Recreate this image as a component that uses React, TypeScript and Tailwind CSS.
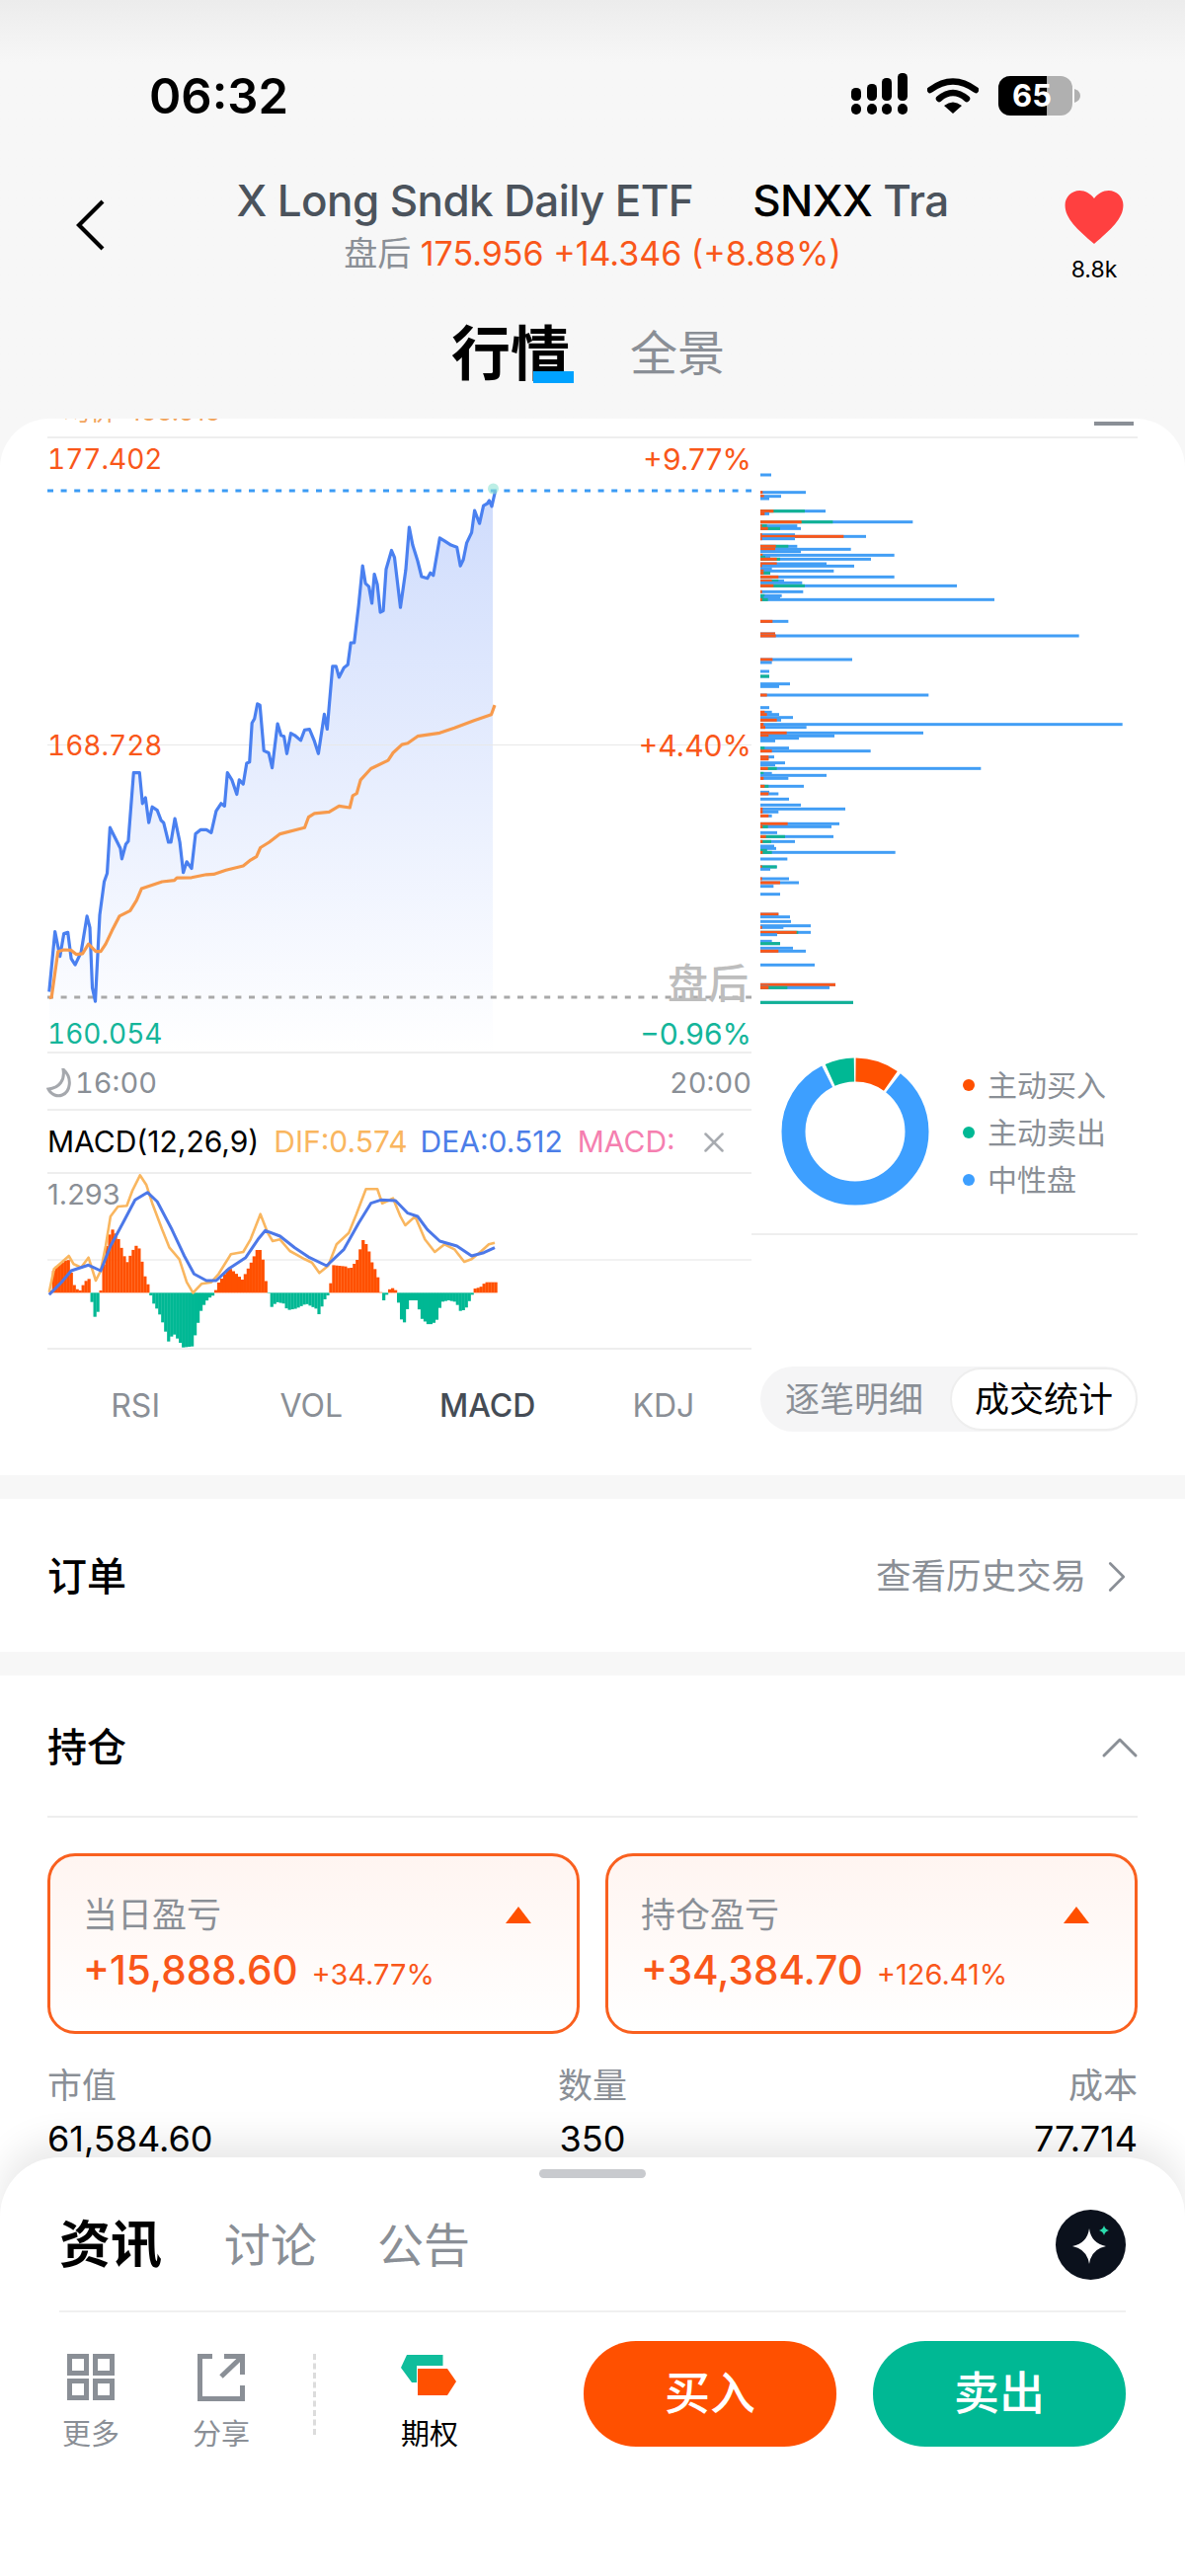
import { ChevronRight, ChevronUp, X } from "lucide-react";

const BLUE_LINE: number[][] = [
  [100,1365],[112,1220],[122,1280],[130,1225],[138,1222],[145,1285],[153,1300],[165,1270],[177,1183],[183,1210],[188,1355],[194,1388],[203,1180],[212,1100],[218,1080],[224,970],[245,1020],[248,1045],[256,1010],[261,1003],[272,838],[284,838],[290,912],[296,898],[303,958],[310,920],[320,928],[328,953],[333,958],[343,1005],[348,1005],[356,948],[366,1005],[373,1078],[380,1052],[390,1068],[398,985],[408,975],[420,975],[430,982],[440,930],[450,912],[457,918],[463,838],[472,855],[482,890],[487,855],[495,865],[502,815],[508,812],[513,718],[518,708],[524,672],[529,675],[537,785],[547,790],[554,826],[565,720],[572,748],[578,750],[584,792],[592,743],[600,748],[612,760],[620,735],[630,733],[640,762],[648,792],[660,697],[666,733],[677,582],[684,582],[690,608],[700,585],[708,578],[714,525],[721,525],[730,435],[738,340],[744,382],[751,390],[757,430],[762,360],[768,385],[774,452],[780,448],[786,348],[797,303],[803,320],[815,440],[826,350],[833,247],[840,290],[850,328],[858,366],[870,370],[876,357],[882,363],[895,273],[905,280],[918,290],[930,295],[937,340],[943,325],[950,285],[960,260],[966,207],[976,238],[984,195],[992,190],[996,183],[1001,197],[1008,160],
];

const AVG_LINE: number[][] = [
  [100,1380],[105,1378],[118,1268],[130,1264],[145,1265],[155,1275],[168,1273],[180,1250],[195,1268],[205,1268],[215,1250],[228,1218],[243,1183],[265,1170],[278,1145],[288,1117],[300,1112],[330,1100],[355,1097],[360,1091],[390,1090],[420,1083],[435,1082],[460,1072],[495,1062],[510,1048],[522,1040],[530,1018],[548,1005],[570,985],[610,973],[620,970],[628,945],[640,936],[670,932],[690,918],[712,922],[718,893],[726,888],[734,855],[755,828],[790,808],[800,790],[818,770],[830,767],[850,750],[895,742],[925,730],[965,712],[1000,698],[1007,675],
];

const DIF_LINE: number[][] = [
  [100,800],[110,730],[125,710],[140,690],[150,715],[165,725],[180,695],[195,765],[205,735],[215,660],[225,570],[240,540],[258,538],[270,490],[285,445],[298,475],[310,530],[330,610],[345,665],[365,700],[380,770],[393,802],[410,775],[430,770],[445,745],[470,685],[495,678],[510,640],[530,563],[545,620],[555,645],[570,640],[590,675],[620,700],[635,710],[650,742],[668,720],[685,655],[710,620],[725,565],[745,487],[768,487],[778,530],[800,515],[815,570],[825,597],[845,570],[865,640],[885,678],[905,655],[925,670],[945,708],[960,700],[980,675],[995,655],[1007,650],
];

const DEA_LINE: number[][] = [
  [100,808],[125,770],[145,735],[180,718],[205,735],[225,660],[250,590],[275,520],[300,497],[320,525],[350,610],[375,690],[395,745],[420,765],[440,765],[465,730],[500,695],[525,640],[540,613],[570,630],[600,665],[630,695],[665,720],[700,670],[730,590],[755,530],[775,520],[805,522],[830,560],[850,570],[870,610],[895,645],[930,660],[960,690],[985,680],[1007,665],
];

const HISTOGRAM: number[][] = [
  [100,795],[106,735],[112,722],[120,715],[128,705],[138,702],[145,770],[152,790],[160,795],[170,768],[178,760],[181,795],[184,830],[190,875],[196,860],[200,810],[202,795],[210,690],[218,630],[226,610],[236,630],[245,670],[255,712],[265,680],[273,658],[282,670],[290,745],[297,770],[301,795],[308,830],[320,860],[330,900],[340,950],[350,925],[360,945],[370,968],[388,965],[396,920],[405,860],[415,830],[425,815],[433,808],[440,775],[450,755],[462,725],[475,740],[490,762],[505,720],[520,672],[530,672],[535,745],[542,795],[546,810],[550,845],[560,830],[575,835],[582,855],[600,850],[620,835],[640,850],[647,870],[655,828],[665,808],[668,795],[675,718],[700,722],[710,730],[725,700],[735,640],[745,660],[755,715],[765,745],[770,795],[775,808],[778,825],[784,808],[786,795],[795,787],[803,795],[806,808],[812,880],[820,892],[830,825],[845,825],[855,880],[870,900],[885,890],[895,830],[910,825],[925,830],[935,860],[945,850],[958,808],[962,790],[975,785],[985,770],[1000,770],[1007,770],
];

// y, end, orange end, green end (crop units)
const BARS_TOP: number[][] = [
  [3,48,0,0],[56,153,22,0],[68,78,26,0],[75,42,0,0],[113,213,55,150],[121,42,28,0],[146,478,140,235],[158,127,20,35],[166,138,38,75],[185,120,20,0],[190,336,268,0],[197,120,20,0],[220,127,62,100],[229,290,60,0],[236,138,0,0],[247,422,22,0],[253,45,0,30],[259,351,65,75],[273,216,65,0],[280,300,20,0],[288,50,0,0],[295,238,25,0],[301,45,25,45],[313,422,70,0],[325,87,50,70],[331,142,0,0],[340,612,55,150],[358,145,20,0],[370,80,0,28],[376,75,0,25],[382,726,20,38],[448,100,52,0],[486,60,60,0],[492,983,62,0],[564,294,52,0],[573,50,0,0],[600,42,0,0],[615,42,0,42],[638,105,0,0],[646,72,0,0],[672,526,35,0],[710,42,0,0],[724,50,28,0],[731,72,35,0],[740,114,0,0],[748,78,65,0],[761,1115,25,0],[770,155,30,0],[787,510,95,0],[796,240,40,0],[803,132,0,0],[811,60,0,0],[833,102,0,28],
];

const BARS_BOTTOM: number[][] = [
  [2,350,50,0],[20,57,40,0],[26,40,40,0],[38,90,0,0],[44,60,0,0],[55,685,38,65],[70,50,0,25],[76,216,0,0],[85,100,25,0],[109,147,28,40],[127,42,0,0],[132,70,40,0],[148,102,0,0],[166,138,0,0],[178,273,22,0],[187,70,22,0],[199,50,40,0],[223,255,98,0],[232,231,22,38],[250,66,0,0],[262,237,32,90],[277,120,22,48],[291,57,0,0],[298,63,0,0],[304,35,0,35],[310,425,22,50],[330,97,0,0],[354,65,20,65],[361,45,0,0],[390,102,20,0],[402,132,75,0],[413,55,0,0],[437,75,0,0],[498,70,70,0],[506,105,0,0],[520,108,0,0],[533,168,0,0],[538,85,20,0],[553,168,125,130],[560,66,0,0],[580,50,0,0],[587,75,0,75],[601,114,0,0],[610,153,70,0],[652,180,0,0],[712,243,243,0],[717,40,40,0],[721,225,40,97],[766,297,0,297],
];

const priceX = (x: number) => x / 2.01;
const priceY = (y: number) => 430 + y / 2.376;
const macdY = (y: number) => 1040 + y / 3;

const toPoints = (line: number[][], fy: (y: number) => number) =>
  line.map(([x, y]) => `${priceX(x).toFixed(1)},${fy(y).toFixed(1)}`).join(" ");

const histogramBars = () => {
  const bars: { x: number; y: number }[] = [];
  for (let zx = 100; zx <= 1007; zx += 6) {
    const i = HISTOGRAM.findIndex((p) => p[0] >= zx);
    const b = HISTOGRAM[Math.max(i, 1)];
    const a = HISTOGRAM[Math.max(i, 1) - 1];
    const y = a[1] + ((b[1] - a[1]) * (zx - a[0])) / Math.max(b[0] - a[0], 1);
    bars.push({ x: zx, y });
  }
  return bars;
};

function VolumeBars({ rows, base }: { rows: number[][]; base: number }) {
  return (
    <>
      {rows.map(([y, end, orange, green], i) => {
        const top = base + y / 3 - 1.5;
        const w = (v: number) => (v - 15) / 3;
        return (
          <g key={i}>
            <rect x={770} y={top} width={w(end)} height={3} fill="#429ef5" />
            {green > 0 && <rect x={770} y={top} width={w(green)} height={3} fill="#12b294" />}
            {orange > 0 && <rect x={770} y={top} width={w(orange)} height={3} fill="#f9571a" />}
          </g>
        );
      })}
    </>
  );
}

function StatusIcons() {
  return (
    <div className="flex items-center">
      <svg width="60" height="48" viewBox="0 0 60 48" fill="#000" className="mr-[17px]">
        <rect x="0" y="16" width="10" height="13" rx="4.5" />
        <rect x="16" y="12" width="10" height="17" rx="4.5" />
        <rect x="31" y="6" width="10" height="23" rx="4.5" />
        <rect x="47" y="1" width="10" height="28" rx="4.5" />
        <rect x="0" y="32" width="10" height="11" rx="5" />
        <rect x="16" y="32" width="10" height="11" rx="5" />
        <rect x="31" y="32" width="10" height="11" rx="5" />
        <rect x="47" y="32" width="10" height="11" rx="5" />
      </svg>
      <svg width="52" height="38" viewBox="0 0 52 38" className="mr-[20px]">
        <path d="M3 13 Q26 -4 49 13" fill="none" stroke="#000" strokeWidth="6.5" strokeLinecap="round" />
        <path d="M12 22 Q26 10 40 22" fill="none" stroke="#000" strokeWidth="6.5" strokeLinecap="round" />
        <path d="M26 37 L17 29 Q26 22 35 29 Z" fill="#000" />
      </svg>
      <div className="relative flex h-[40px] w-[75px] overflow-hidden rounded-[12px] bg-[#b0b0b0]">
        <div className="h-full w-[49px] bg-black" />
        <span className="absolute left-[14px] top-0 text-[31px] font-bold leading-[40px] text-white">65</span>
      </div>
      <svg width="6" height="14" viewBox="0 0 6 14" className="ml-[2px]">
        <path d="M0 0 Q6 2 6 7 Q6 12 0 14 Z" fill="#b0b0b0" />
      </svg>
    </div>
  );
}

function PriceChart() {
  const blue = toPoints(BLUE_LINE, priceY);
  const avg = toPoints(AVG_LINE, priceY);
  return (
    <div className="relative h-[621px] w-[713px]">
      <svg width="713" height="621" viewBox="48 444 713 621" className="block">
        <defs>
          <linearGradient id="area" gradientUnits="userSpaceOnUse" x1="0" y1="497" x2="0" y2="1065">
            <stop offset="0" stopColor="#cfdcfc" />
            <stop offset="0.55" stopColor="#e9effe" />
            <stop offset="1" stopColor="#ffffff" />
          </linearGradient>
        </defs>
        <polygon points={`${blue} 499,497 499,1065 50,1065`} fill="url(#area)" />
        <line x1="48" x2="761" y1="754.5" y2="754.5" stroke="#e8e8e8" strokeWidth="1" />
        <line x1="48" x2="761" y1="497" y2="497" stroke="#3b9bf5" strokeWidth="3" strokeDasharray="6 7.6" />
        <line x1="48" x2="761" y1="1010" y2="1010" stroke="#a9a9a9" strokeWidth="3" strokeDasharray="6 7.6" />
        <polyline points={blue} fill="none" stroke="#4a80f0" strokeWidth="3.2" strokeLinejoin="round" />
        <polyline points={avg} fill="none" stroke="#f79a4c" strokeWidth="3.2" strokeLinejoin="round" />
        <circle cx="499.5" cy="495" r="5.5" fill="#8fe3d3" opacity="0.6" />
      </svg>
      <span className="absolute left-0 top-[3px] text-[28px] tabular-nums leading-[36px] text-[#f9571a]">177.402</span>
      <span className="absolute right-0 top-[3px] text-[30px] leading-[36px] text-[#f9571a]">+9.77%</span>
      <span className="absolute left-0 top-[293px] text-[28px] tabular-nums leading-[36px] text-[#f9571a]">168.728</span>
      <span className="absolute right-0 top-[293px] text-[30px] leading-[36px] text-[#f9571a]">+4.40%</span>
      <span className="absolute right-[3px] top-[527px] text-[41px] font-medium leading-[50px] text-[#bdbdbd]">盘后</span>
      <span className="absolute left-0 top-[585px] text-[28px] tabular-nums leading-[36px] text-[#14b59a]">160.054</span>
      <span className="absolute right-0 top-[585px] text-[30px] leading-[36px] text-[#14b59a]">−0.96%</span>
    </div>
  );
}

function MacdChart() {
  return (
    <div className="relative h-[176px] w-[713px]">
      <svg width="713" height="176" viewBox="48 1187 713 176" className="block">
        <line x1="48" x2="761" y1="1274" y2="1274" stroke="#eeeeee" strokeWidth="1.5" />
        {histogramBars().map((bar, i) => {
          const up = bar.y < 802;
          const top = macdY(Math.min(bar.y, 802));
          const h = Math.abs(macdY(bar.y) - macdY(802));
          return (
            <rect
              key={i}
              x={priceX(bar.x)}
              y={top}
              width={3.2}
              height={Math.max(h, 0.5)}
              fill={up ? "#ff5000" : "#00b894"}
            />
          );
        })}
        <polyline points={toPoints(DIF_LINE, macdY)} fill="none" stroke="#f9b65f" strokeWidth="2.6" strokeLinejoin="round" />
        <polyline points={toPoints(DEA_LINE, macdY)} fill="none" stroke="#4c78e8" strokeWidth="3" strokeLinejoin="round" />
      </svg>
      <span className="absolute left-0 top-[3px] text-[29px] leading-[36px] text-[#8a8f96]">1.293</span>
    </div>
  );
}

function Donut() {
  return (
    <svg width="150" height="150" viewBox="0 0 150 150" className="-rotate-90">
      <circle cx="75" cy="75" r="62.5" pathLength={360} fill="none" stroke="#ff5000" strokeWidth="24" strokeDasharray="34.5 325.5" strokeDashoffset="-0.5" />
      <circle cx="75" cy="75" r="62.5" pathLength={360} fill="none" stroke="#3d9fff" strokeWidth="24" strokeDasharray="295 65" strokeDashoffset="-38" />
      <circle cx="75" cy="75" r="62.5" pathLength={360} fill="none" stroke="#00b894" strokeWidth="24" strokeDasharray="23 337" strokeDashoffset="-336" />
    </svg>
  );
}

function ProfitCard({ label, value, pct }: { label: string; value: string; pct: string }) {
  return (
    <div className="h-[183px] rounded-[28px] border-[3px] border-[#f9601f] bg-gradient-to-b from-[#fff5f1] to-white pl-[33px] pr-[46px] pt-[37px]">
      <div className="flex items-center justify-between">
        <span className="text-[35px] leading-[44px] text-[#8a8f96]">{label}</span>
        <span className="h-0 w-0 border-x-[13px] border-b-[17px] border-x-transparent border-b-[#ff5000]" />
      </div>
      <div className="mt-[10px] flex items-baseline gap-[14px] text-[#f9571a]">
        <span className="text-[40.5px] font-medium leading-[50px]">{value}</span>
        <span className="text-[29px] leading-[50px]">{pct}</span>
      </div>
    </div>
  );
}

function BottomSheet() {
  return (
    <div className="absolute bottom-0 left-0 h-[424px] w-full rounded-t-[60px] bg-white px-[60px] shadow-[0_-16px_36px_rgba(0,0,0,0.09)]">
      <div className="mx-auto mt-[12px] h-[9px] w-[108px] rounded-full bg-[#c8cace]" />
      <div className="mt-[32px] flex items-center border-b-2 border-[#f0f0f0] pb-[31px]">
        <span className="text-[52px] font-bold leading-[71px] text-black">资讯</span>
        <span className="ml-[63px] text-[47px] leading-[71px] text-[#8a8f96]">讨论</span>
        <span className="ml-[61px] text-[47px] leading-[71px] text-[#8a8f96]">公告</span>
        <div className="ml-auto flex h-[71px] w-[71px] items-center justify-center rounded-full bg-[#0b111c]">
          <svg width="71" height="71" viewBox="0 0 71 71">
            <path d="M34 19 Q36 34 51 37 Q36 40 34 55 Q32 40 17 37 Q32 34 34 19 Z" fill="#fff" />
            <path d="M49 16 Q50 20 54 21 Q50 22 49 26 Q48 22 44 21 Q48 20 49 16 Z" fill="#2bdcae" />
          </svg>
        </div>
      </div>
      <div className="mt-[29px] flex items-start">
        <div className="flex w-[64px] flex-col items-center pt-[13px]">
          <svg width="48" height="48" viewBox="0 0 48 48" fill="none" stroke="#8a8f96" strokeWidth="5">
            <rect x="2.5" y="2.5" width="17" height="17" />
            <rect x="28.5" y="2.5" width="17" height="17" />
            <rect x="2.5" y="27.5" width="17" height="17" />
            <rect x="28.5" y="27.5" width="17" height="17" />
          </svg>
          <span className="mt-[16px] text-[29px] leading-[36px] text-[#8a8f96]">更多</span>
        </div>
        <div className="ml-[68px] flex w-[64px] flex-col items-center pt-[13px]">
          <svg width="48" height="48" viewBox="0 0 48 48" fill="none" stroke="#8a8f96" strokeWidth="5">
            <path d="M15 2.5 H2.5 V45.5 H45.5 V32" />
            <path d="M24 23 L45 3" />
            <path d="M27 2.5 H45.5 V21" />
          </svg>
          <span className="mt-[16px] text-[29px] leading-[36px] text-[#8a8f96]">分享</span>
        </div>
        <div className="ml-[61px] mt-[13px] h-[82px] border-l-[3px] border-dashed border-[#dcdcdc]" />
        <div className="ml-[83px] flex w-[64px] flex-col items-center pt-[13px]">
          <svg width="58" height="48" viewBox="0 0 58 48">
            <path d="M6 1 H42.5 V12 H16 V29 H11 L0 14 Z" fill="#10bd9c" />
            <path d="M17 15 H47 L56 28 L47 42 H17 Z" fill="#ff5000" />
          </svg>
          <span className="mt-[16px] text-[29px] leading-[36px] text-black">期权</span>
        </div>
        <button className="ml-auto flex h-[107px] w-[256px] items-center justify-center rounded-[53px] bg-[#ff5000] pb-[2px] text-[46px] font-medium text-white">
          买入
        </button>
        <button className="ml-[37px] flex h-[107px] w-[256px] items-center justify-center rounded-[53px] bg-[#00b894] pb-[2px] text-[46px] font-medium text-white">
          卖出
        </button>
      </div>
    </div>
  );
}

export default function App() {
  return (
    <div className="relative h-[2609px] w-[1200px] overflow-hidden bg-[#f7f7f7] font-['Inter','Noto_Sans_CJK_SC',sans-serif]">
      {/* status bar */}
      <div className="h-[424px] bg-gradient-to-b from-[#ececec] via-[#f7f7f7] via-[15%] to-[#f7f7f7]">
        <div className="flex h-[54px] translate-y-[70px] items-center justify-between pl-[151px] pr-[106px]">
          <span className="text-[49px] font-semibold leading-none text-black">06:32</span>
          <StatusIcons />
        </div>

        {/* title */}
        <div className="mt-[126px] grid grid-cols-[236px_minmax(0,1fr)_236px]">
          <div className="pl-[77px] pt-[22px]">
            <svg width="30" height="52" viewBox="0 0 30 52" fill="none" stroke="#000" strokeWidth="4.2">
              <path d="M27 2 L3 26 L27 50" />
            </svg>
          </div>
          <div className="text-center">
            <div className="whitespace-nowrap text-[44px] font-medium leading-[46px] tracking-[-0.6px] text-[#4b535c]">
              X Long Sndk Daily ETF<span className="ml-[60px] text-black">SNXX</span> Tra
            </div>
            <div className="mt-[9px] text-[34px] leading-[44px] text-[#f9571a]">
              <span className="text-[#8a8f96]">盘后</span> 175.956 +14.346 (+8.88%)
            </div>
          </div>
          <div className="flex flex-col items-end pr-[61px] pt-[13px]">
            <div className="flex w-[62px] flex-col items-center">
              <svg width="60" height="54" viewBox="0 0 24 22">
                <path d="M12 22 C5 16 0 11.500 0 6 C0 2.600 2.700 0 6 0 C8.400 0 10.600 1.300 12 3.300 C13.400 1.300 15.600 0 18 0 C21.300 0 24 2.600 24 6 C24 11.500 19 16 12 22 Z" fill="#ff4040" />
              </svg>
              <span className="mt-[12px] text-[23px] leading-[28px] text-black">8.8k</span>
            </div>
          </div>
        </div>

        {/* tabs */}
        <div className="mt-[36px] flex items-center pl-[457px]">
          <span className="relative text-[60px] font-bold leading-[70px] text-black">
            行情
            <span className="absolute left-[83px] top-[53px] h-[12px] w-[41px] bg-[#00a2ff]" />
          </span>
          <span className="ml-[61px] text-[48px] leading-[70px] text-[#8a8f96]">全景</span>
        </div>
      </div>

      {/* chart panel */}
      <div className="relative h-[1070px] overflow-hidden rounded-t-[50px] bg-white">
        <div className="absolute left-[65px] top-[-22px] text-[26px] leading-[30px] text-[#f2a55e]">均价: 166.516</div>
        <div className="absolute right-[52px] top-[3px] h-[4px] w-[40px] bg-[#8a8f96]" />
        <div className="ml-[48px] mr-[48px] h-[20px] border-b-2 border-[#eeeeee]" />
        <div className="flex">
          <div className="w-[761px] pl-[48px]">
            <PriceChart />
            <div className="flex h-[60px] items-center justify-between border-y-2 border-[#eeeeee] pt-[4px] text-[29px] tabular-nums text-[#8a8f96]">
              <div className="flex items-center gap-[3px]">
                <svg width="26" height="30" viewBox="0 0 26 30" className="-ml-[1px]">
                  <path d="M17 1 C19 12 13 20 2 21 C5 27 11 29 16 27 C24 24 27 10 17 1 Z" fill="none" stroke="#a5a8ad" strokeWidth="3" />
                </svg>
                16:00
              </div>
              <span>20:00</span>
            </div>
            <div className="flex h-[62px] items-center pt-[1px] text-[30px]">
              <span className="text-black">MACD(12,26,9)</span>
              <span className="ml-[15px] text-[#f9b65f]">DIF:0.574</span>
              <span className="ml-[13px] text-[#4c7ee8]">DEA:0.512</span>
              <span className="ml-[15px] text-[#f57fb0]">MACD:</span>
              <X size={34} strokeWidth={1.8} className="ml-[22px] text-[#a8abb0]" />
            </div>
            <div className="border-y-2 border-[#eeeeee]">
              <MacdChart />
            </div>
            <div className="mt-[27px] grid grid-cols-4 text-center text-[32px] leading-[60px] text-[#8a8f96]">
              <span>RSI</span>
              <span>VOL</span>
              <span className="font-medium text-[#454c55]">MACD</span>
              <span>KDJ</span>
            </div>
          </div>

          <div className="w-[391px]">
            <svg width="391" height="576" viewBox="761 444 391 576" className="block">
              <VolumeBars rows={BARS_TOP} base={480} />
              <VolumeBars rows={BARS_BOTTOM} base={760} />
            </svg>
            <div className="flex h-[231px] items-center border-b-2 border-[#eeeeee] pt-[22px] pl-[30px]">
              <Donut />
              <div className="ml-[34px] flex flex-col gap-[12px] pt-[3px] text-[30px] leading-[36px] text-[#8a8f96]">
                <div className="flex items-center gap-[13px]">
                  <span className="h-[12px] w-[12px] rounded-full bg-[#ff5000]" />
                  主动买入
                </div>
                <div className="flex items-center gap-[13px]">
                  <span className="h-[12px] w-[12px] rounded-full bg-[#00b894]" />
                  主动卖出
                </div>
                <div className="flex items-center gap-[13px]">
                  <span className="h-[12px] w-[12px] rounded-full bg-[#3d9fff]" />
                  中性盘
                </div>
              </div>
            </div>
            <div className="ml-[9px] mt-[133px] flex h-[66px] items-center rounded-full bg-[#f5f5f6] text-[35px]">
              <span className="flex-1 pl-[25px] text-[#8a8f96]">逐笔明细</span>
              <span className="flex h-[64px] w-[190px] items-center justify-center rounded-full border-2 border-[#eeeeee] bg-white text-black">
                成交统计
              </span>
            </div>
          </div>
        </div>
      </div>

      {/* orders */}
      <div className="mt-[24px] flex h-[155px] items-center justify-between bg-white pl-[48px] pr-[48px] pt-[3px]">
        <span className="text-[40px] font-medium text-black">订单</span>
        <div className="-mr-[6px] flex items-center gap-[4px] text-[35.500px] text-[#8a8f96]">
          查看历史交易
          <ChevronRight size={54} strokeWidth={1.2} className="text-[#8a8f96]" />
        </div>
      </div>

      {/* holdings */}
      <div className="mt-[24px] h-[920px] bg-white px-[48px]">
        <div className="flex h-[144px] items-center justify-between border-b-2 border-[#eeeeee] pt-[3px]">
          <span className="text-[40px] font-medium text-black">持仓</span>
          <ChevronUp size={64} strokeWidth={1.1} className="-mr-[14px] text-[#8a8f96]" />
        </div>
        <div className="mt-[36px] grid grid-cols-2 gap-[26px]">
          <ProfitCard label="当日盈亏" value="+15,888.60" pct="+34.77%" />
          <ProfitCard label="持仓盈亏" value="+34,384.70" pct="+126.41%" />
        </div>
        <div className="mt-[30px] grid grid-cols-3 text-[35px] leading-[44px]">
          <span className="text-[#8a8f96]">市值</span>
          <span className="text-center text-[#8a8f96]">数量</span>
          <span className="text-right text-[#8a8f96]">成本</span>
          <span className="mt-[10px] text-[36px] text-black">61,584.60</span>
          <span className="mt-[10px] text-center text-[36px] text-black">350</span>
          <span className="mt-[10px] text-right text-[36px] text-black">77.714</span>
        </div>
      </div>

      <BottomSheet />
    </div>
  );
}
